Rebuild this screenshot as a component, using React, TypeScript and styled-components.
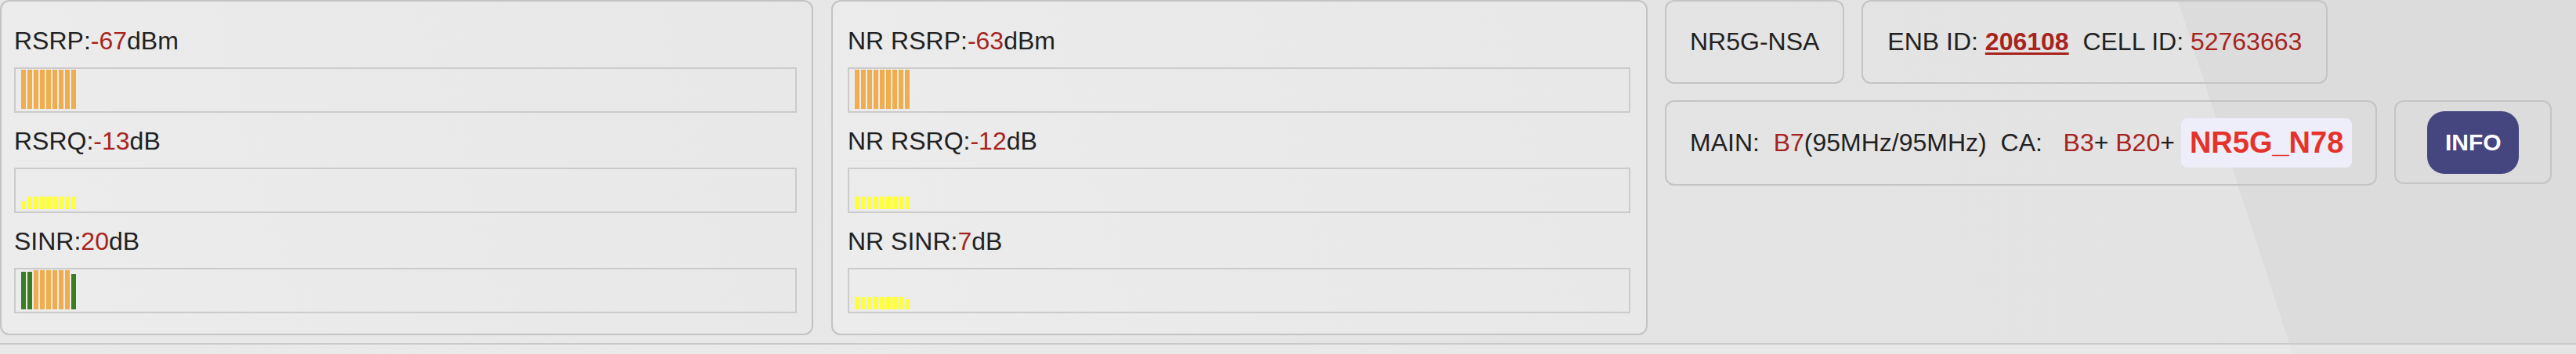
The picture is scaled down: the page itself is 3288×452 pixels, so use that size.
import React from "react";
import styled, { createGlobalStyle } from "styled-components";

const GlobalStyle = createGlobalStyle`
  html, body {
    margin: 0;
    padding: 0;
  }
  body {
    width: 3288px;
    height: 452px;
    overflow: hidden;
    font-family: "Liberation Sans", Arial, Helvetica, sans-serif;
    color: #222;
    background: linear-gradient(
      72deg,
      #e7e7e7 0%,
      #e8e8e8 30%,
      #e4e4e4 55%,
      #e3e3e3 85.2%,
      #dcdcdc 85.2%,
      #dcdcdc 100%
    );
  }
`;

const Page = styled.div`
  width: 3288px;
  height: 452px;
  display: flex;
  flex-direction: column;
`;

const Top = styled.div`
  display: flex;
  align-items: flex-start;
  height: 428px;
`;

const Panel = styled.section<{ $w: number; $pl: number; $pr: number; $ml: number }>`
  box-sizing: border-box;
  width: ${(p) => p.$w}px;
  height: 428px;
  margin-left: ${(p) => p.$ml}px;
  padding: 32px ${(p) => p.$pr}px 26px ${(p) => p.$pl}px;
  border: 2px solid #c3c3c3;
  border-radius: 12px;
  background: linear-gradient(
    75deg,
    rgba(236, 236, 236, 1) 0%,
    rgba(234, 234, 234, 1) 40%,
    rgba(232, 232, 232, 1) 100%
  );
  display: flex;
  flex-direction: column;
  gap: 18px;
`;

const Metric = styled.div`
  display: flex;
  flex-direction: column;
  gap: 16px;
`;

const Label = styled.div`
  font-size: 32px;
  line-height: 36px;
  height: 36px;
  white-space: pre;
`;

const Val = styled.span`
  color: #a8231d;
`;

const BarBox = styled.div`
  box-sizing: border-box;
  height: 58px;
  border: 2px solid #cbcbcb;
  padding: 0 7px 3px 7px;
  display: flex;
  align-items: flex-end;
  gap: 2px;
`;

const Bar = styled.div<{ $h: number; $c: string }>`
  width: 6px;
  height: ${(p) => p.$h}px;
  background: ${(p) => p.$c};
  flex: none;
`;

const RightCol = styled.div`
  margin-left: 22px;
  display: flex;
  flex-direction: column;
  gap: 21px;
`;

const BoxRow = styled.div`
  display: flex;
  gap: 22px;
`;

const InfoBox = styled.div<{ $h: number; $px: number }>`
  box-sizing: border-box;
  height: ${(p) => p.$h}px;
  padding: 0 ${(p) => p.$px}px;
  border: 2px solid #c4c4c4;
  border-radius: 12px;
  display: flex;
  align-items: center;
  font-size: 32px;
  white-space: pre;
`;

const StrongLink = styled.span`
  color: #a8231d;
  font-weight: bold;
  text-decoration: underline;
  text-underline-offset: 3px;
  text-decoration-thickness: 3px;
`;

const Highlight = styled.span`
  margin-left: 8px;
  padding: 8px 11px;
  border-radius: 8px;
  background: #eeeefa;
  color: #e5322a;
  font-weight: bold;
  font-size: 38px;
  line-height: 47px;
`;

const InfoButton = styled.button`
  width: 117px;
  height: 80px;
  border: none;
  border-radius: 22px;
  background: #454680;
  color: #fff;
  font-family: "Liberation Sans", Arial, sans-serif;
  font-weight: bold;
  font-size: 30px;
  padding: 0;
`;

const Divider = styled.div`
  margin-top: 10px;
  height: 2px;
  background: #c9c9c9;
`;

const Footer = styled.div`
  flex: 1;
  background: rgba(235, 235, 235, 0.6);
`;

const ORANGE = "#f0ad4e";
const YELLOW = "#ffff3a";
const GREEN = "#3b7d23";

type BarSpec = { h: number; c: string };

const rep = (n: number, h: number, c: string): BarSpec[] =>
  Array.from({ length: n }, () => ({ h, c }));

type MetricSpec = { name: string; value: string; unit: string; bars: BarSpec[] };

const lte: MetricSpec[] = [
  { name: "RSRP:", value: "-67", unit: "dBm", bars: rep(9, 50, ORANGE) },
  {
    name: "RSRQ:",
    value: "-13",
    unit: "dB",
    bars: [{ h: 10, c: YELLOW }, ...rep(8, 16, YELLOW)],
  },
  {
    name: "SINR:",
    value: "20",
    unit: "dB",
    bars: [...rep(2, 48, GREEN), ...rep(6, 50, ORANGE), { h: 45, c: GREEN }],
  },
];

const nr: MetricSpec[] = [
  { name: "NR RSRP:", value: "-63", unit: "dBm", bars: rep(9, 50, ORANGE) },
  { name: "NR RSRQ:", value: "-12", unit: "dB", bars: rep(9, 16, YELLOW) },
  {
    name: "NR SINR:",
    value: "7",
    unit: "dB",
    bars: [...rep(8, 16, YELLOW), { h: 13, c: YELLOW }],
  },
];

const MetricRow = ({ m }: { m: MetricSpec }) => (
  <Metric>
    <Label>
      {m.name}
      <Val>{m.value}</Val>
      {m.unit}
    </Label>
    <BarBox>
      {m.bars.map((b, i) => (
        <Bar key={i} $h={b.h} $c={b.c} />
      ))}
    </BarBox>
  </Metric>
);

export default function App() {
  return (
    <>
      <GlobalStyle />
      <Page>
        <Top>
          <Panel $w={1038} $pl={16} $pr={19} $ml={0}>
            {lte.map((m) => (
              <MetricRow key={m.name} m={m} />
            ))}
          </Panel>
          <Panel $w={1042} $pl={19} $pr={20} $ml={23}>
            {nr.map((m) => (
              <MetricRow key={m.name} m={m} />
            ))}
          </Panel>
          <RightCol>
            <BoxRow>
              <InfoBox $h={107} $px={30}>NR5G-NSA</InfoBox>
              <InfoBox $h={107} $px={31}>
                {"ENB ID: "}
                <StrongLink>206108</StrongLink>
                {"  CELL ID: "}
                <Val>52763663</Val>
              </InfoBox>
            </BoxRow>
            <BoxRow>
              <InfoBox $h={109} $px={30}>
                {"MAIN:  "}
                <Val>B7</Val>
                {"(95MHz/95MHz)  CA:   "}
                <Val>B3</Val>
                {"+ "}
                <Val>B20</Val>
                {"+"}
                <Highlight>NR5G_N78</Highlight>
              </InfoBox>
              <InfoBox $h={107} $px={40}>
                <InfoButton>INFO</InfoButton>
              </InfoBox>
            </BoxRow>
          </RightCol>
        </Top>
        <Divider />
        <Footer />
      </Page>
    </>
  );
}
